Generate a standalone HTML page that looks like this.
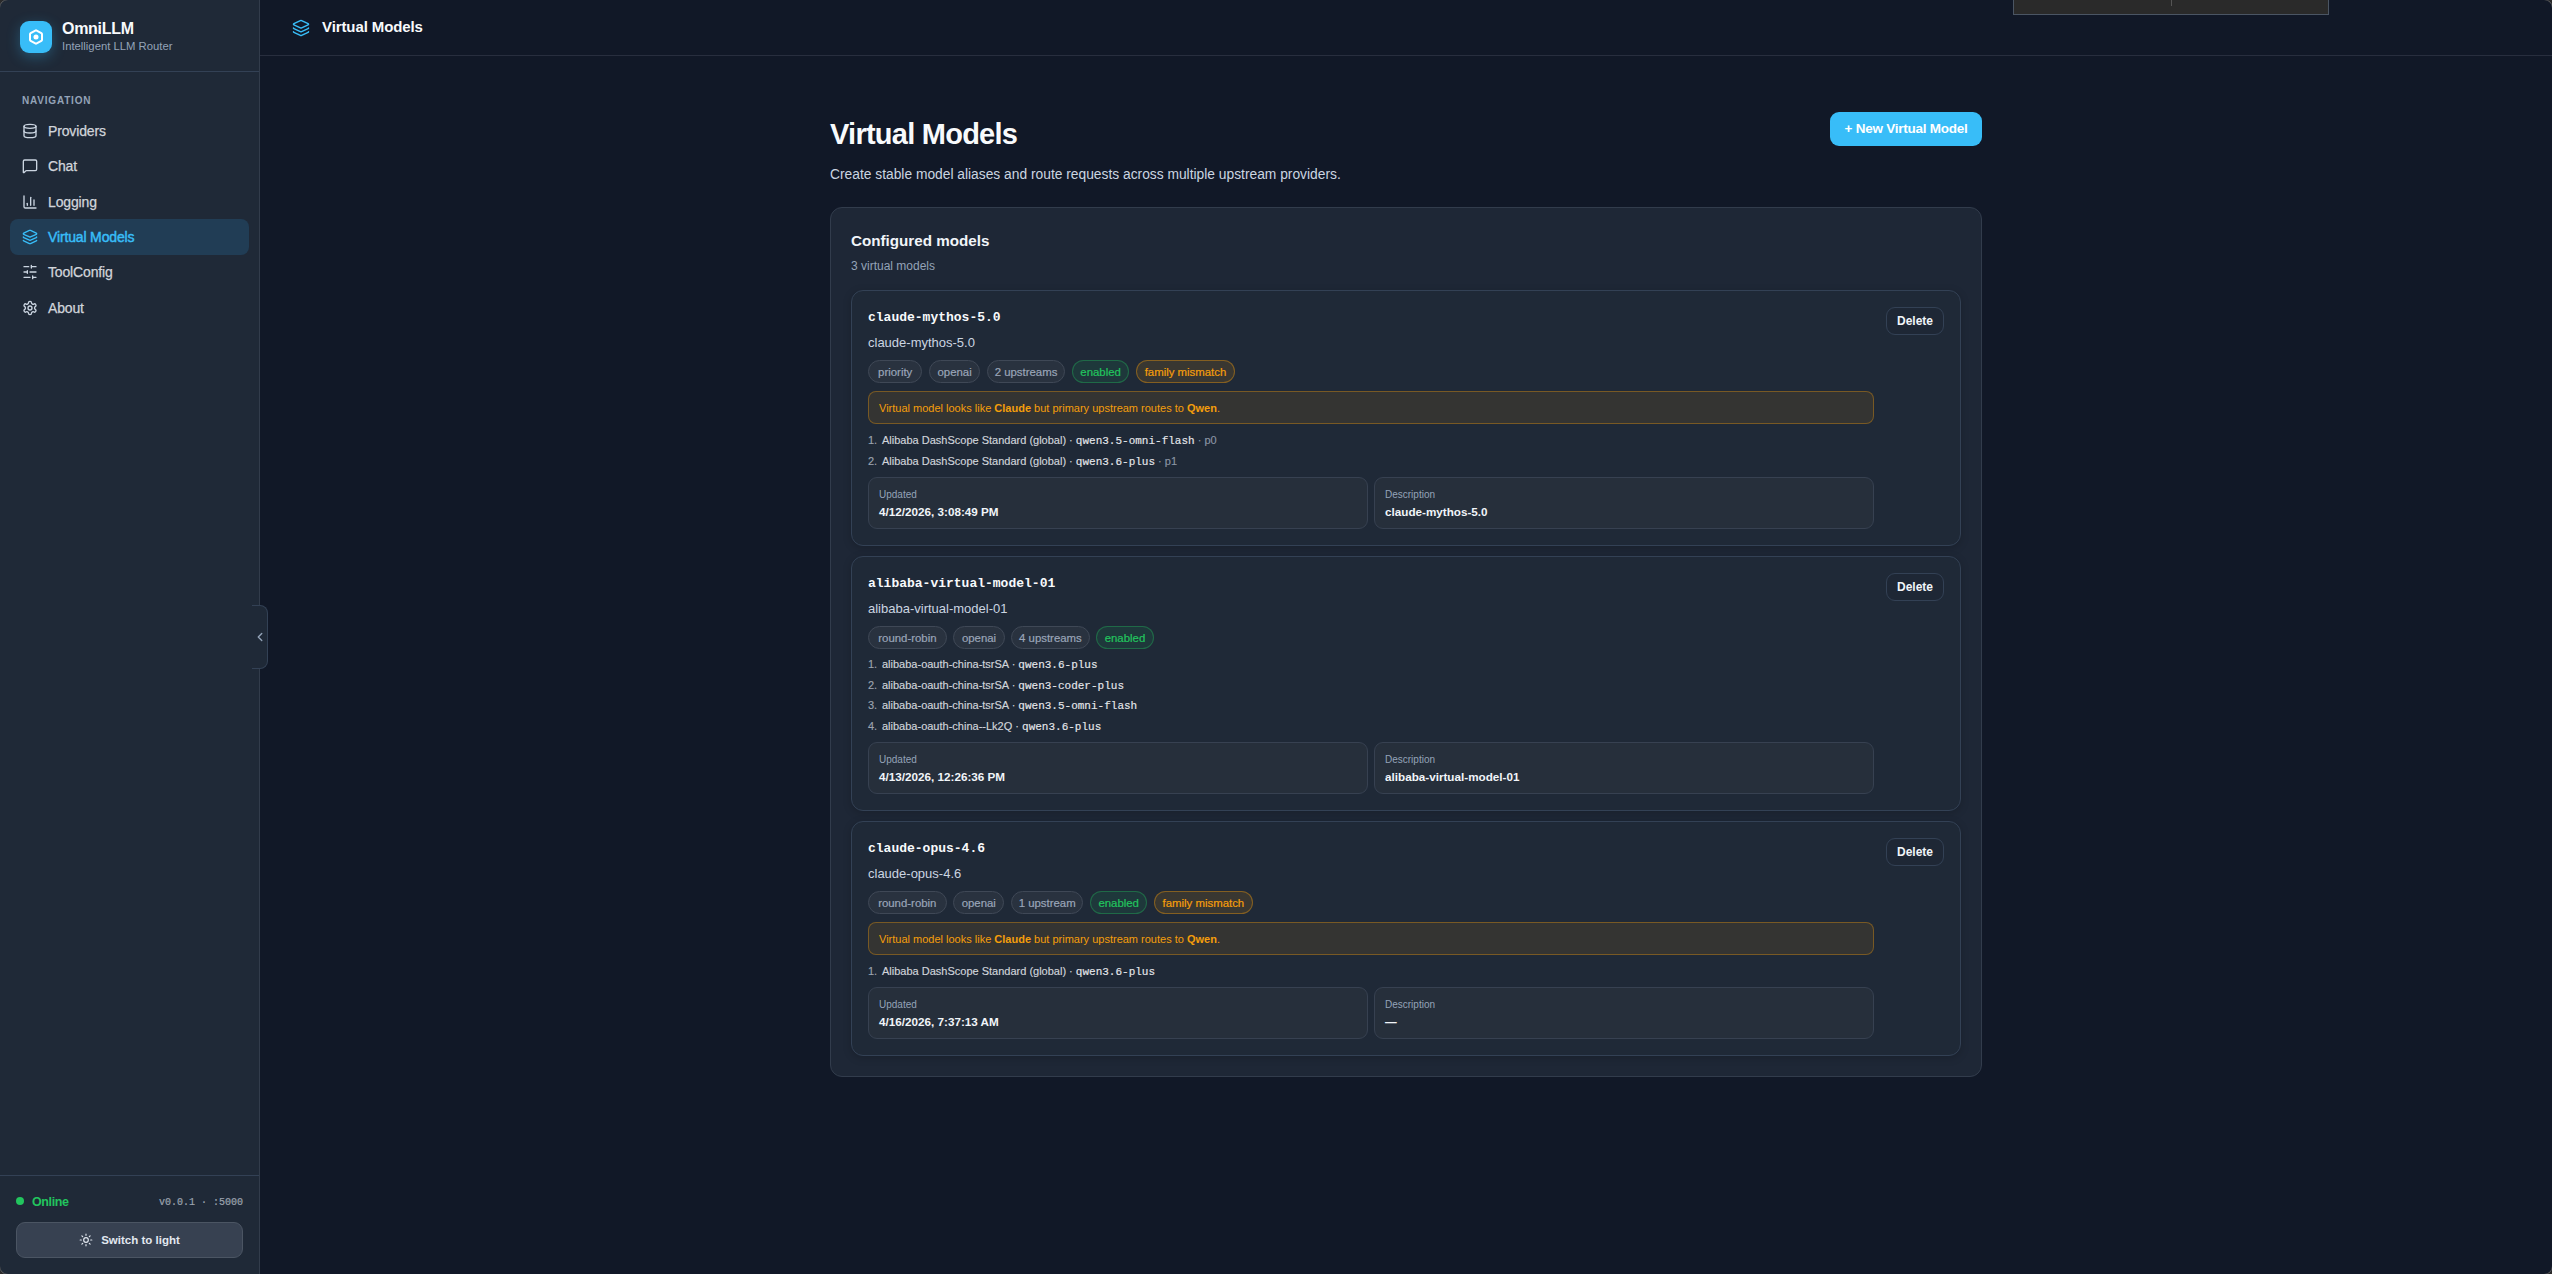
<!DOCTYPE html>
<html><head><meta charset="utf-8"><title>OmniLLM</title>
<style>
*{box-sizing:border-box;margin:0;padding:0}
html,body{-webkit-font-smoothing:antialiased;width:2552px;height:1274px;overflow:hidden;background:#111827;font-family:"Liberation Sans",sans-serif;color:#e5e7eb}
.abs{position:absolute}
svg{display:block}
.mono{font-family:"Liberation Mono",monospace}
/* sidebar */
#sb{position:absolute;left:0;top:0;width:260px;height:1274px;background:#1f2937;border-right:1px solid #323c4b}
#brand{position:absolute;left:0;top:0;width:259px;height:72px;border-bottom:1px solid #334155}
#logo{position:absolute;left:20px;top:21px;width:32px;height:32px;border-radius:9px;background:#38bdf8;box-shadow:0 4px 14px rgba(56,189,248,.3)}
#bname{position:absolute;left:62px;top:19px;font-size:16px;font-weight:700;letter-spacing:-0.3px;color:#f8fafc;line-height:20px;white-space:nowrap}
#bsub{position:absolute;left:62px;top:39px;font-size:11.3px;color:#94a3b8;line-height:14px;white-space:nowrap}
#navlbl{position:absolute;left:22px;top:94.5px;font-size:10px;font-weight:700;letter-spacing:0.8px;color:#94a3b8;line-height:12px}
.nav{position:absolute;left:10px;width:239px;height:36px;border-radius:8px;display:flex;align-items:center;padding-left:12px;font-size:14px;color:#d1d5db;letter-spacing:-0.15px;-webkit-text-stroke:0.25px #d1d5db}
.nav svg{width:16px;height:16px;margin-right:10px;flex:none;stroke:#cbd5e1}
.nav.act{background:#213d55;color:#38bdf8;-webkit-text-stroke:0.45px #38bdf8}
.nav.act svg{stroke:#38bdf8}
#sbfoot{position:absolute;left:0;top:1175px;width:259px;height:99px;border-top:1px solid #334155}
#dot{position:absolute;left:16px;top:1197px;width:8px;height:8px;border-radius:50%;background:#22c55e}
#online{position:absolute;left:32px;top:1195px;letter-spacing:-0.4px;font-size:12.5px;font-weight:700;color:#22c55e;line-height:14px}
#ver{position:absolute;right:16px;top:1197px;font-size:10px;color:#9ca3af;-webkit-text-stroke:0.2px #9ca3af;line-height:12px}
#theme{position:absolute;left:16px;top:1222px;width:227px;height:36px;border-radius:9px;background:#374151;border:1px solid #4b5563;display:flex;align-items:center;justify-content:center;font-size:11.5px;font-weight:700;color:#e2e8f0}
#theme svg{width:14px;height:14px;margin-right:8px;stroke:#e2e8f0}
#tab{position:absolute;left:252px;top:605px;width:16px;height:64px;background:#1f2937;border:1px solid #334155;border-left:none;border-radius:0 8px 8px 0}
#tab svg{position:absolute;left:1px;top:24px;width:14px;height:14px;stroke:#94a3b8}
/* header */
#hdr{position:absolute;left:260px;top:0;width:2292px;height:56px;border-bottom:1px solid #282e3e}
#hdr svg{position:absolute;left:32px;top:19px;width:18px;height:18px;stroke:#38bdf8}
#htitle{position:absolute;left:62px;top:17px;font-size:15px;font-weight:700;color:#f8fafc;line-height:20px;letter-spacing:-0.1px;white-space:nowrap}
#devbox{position:absolute;left:2013px;top:0;width:316px;height:15px;background:#2a2a2a;border:1px solid #4b5563;border-top:none}
#devbox i{position:absolute;left:157px;top:0;width:1px;height:6px;background:#555}
/* content */
#wrap{position:absolute;left:830px;top:0;width:1152px}
#ptitle{position:absolute;left:0;top:116px;font-size:29px;font-weight:700;letter-spacing:-0.75px;color:#f8fafc;line-height:36px;white-space:nowrap}
#pdesc{position:absolute;left:0;top:166px;font-size:13.8px;color:#cbd5e1;line-height:18px;white-space:nowrap}
#newbtn{position:absolute;left:1000px;top:112px;width:152px;height:34px;padding-bottom:2px;border-radius:9px;background:#38bdf8;color:#fff;font-size:13.5px;letter-spacing:-0.25px;font-weight:700;display:flex;align-items:center;justify-content:center}
#card{position:absolute;left:0;top:207px;width:1152px;height:870px;border-radius:12px;background:#1e2736;border:1px solid #323c4c}
#ctitle{position:absolute;left:20px;top:23px;font-size:15.2px;font-weight:700;color:#f1f5f9;line-height:20px;white-space:nowrap}
#csub{position:absolute;left:20px;top:51px;font-size:12px;color:#94a3b8;line-height:14px}
.mc{position:absolute;left:20px;width:1110px;border-radius:12px;background:#1f2937;border:1px solid #334155;box-shadow:0 2px 8px rgba(0,0,0,.18)}
.mcin{position:absolute;left:16px;top:0;width:1006px}
.mname{position:absolute;left:0;font-size:13px;font-weight:700;color:#f8fafc;line-height:16px;white-space:nowrap}
.malias{position:absolute;left:0;font-size:13px;color:#cbd5e1;line-height:16px;white-space:nowrap}
.badges{position:absolute;left:0;display:flex;gap:6.5px}
.bd{padding-bottom:2px;height:23px;border-radius:12px;border:1px solid #3f4856;background:#29323f;color:#9aa5b8;font-size:11.4px;-webkit-text-stroke:0.2px currentColor;padding:0;justify-content:center;display:flex;align-items:center;white-space:nowrap}
.bd.g{background:rgba(34,197,94,.1);border-color:rgba(34,197,94,.35);color:#22c55e}
.bd.o{background:rgba(245,158,11,.12);border-color:rgba(245,158,11,.4);color:#f59e0b}
.warn{position:absolute;left:0;width:1006px;height:33px;border-radius:8px;background:rgba(245,158,11,.1);border:1px solid rgba(245,158,11,.35);color:#f59e0b;font-size:11px;line-height:14px;padding:9px 0 0 10px;white-space:nowrap}
.warn b{font-weight:700}
.ups{position:absolute;left:0;font-size:11px;color:#d1d5db;-webkit-text-stroke:0.15px currentColor;line-height:20.5px;white-space:nowrap}
.ups>div{height:20.5px}
.ups .n{display:inline-block;width:14px;color:#9ca3af}
.ups .m{font-family:"Liberation Mono",monospace;font-size:11px;color:#e5e7eb}
.ups .p{color:#8b95a5}
.info{position:absolute;width:500px;height:52px;border-radius:9px;background:#262f3b;border:1px solid #374151}
.info .k{position:absolute;left:10px;top:11px;font-size:10px;color:#94a3b8;line-height:12px}
.info .v{position:absolute;left:10px;top:27px;font-size:11.7px;font-weight:700;color:#f1f5f9;line-height:14px;white-space:nowrap}
.del{position:absolute;right:16px;width:58px;height:28px;border-radius:9px;border:1px solid #334155;background:#1e2735;color:#f1f5f9;font-size:12px;font-weight:700;display:flex;align-items:center;justify-content:center}
#frame{position:absolute;left:-1px;top:-1px;width:2554px;height:1276px;border-radius:9px;border:1px solid #5a5a5a;box-shadow:0 0 0 40px #2b2b2b;pointer-events:none}
</style></head>
<body>
<div id="sb">
  <div id="brand">
    <div id="logo"><svg viewBox="0 0 24 24" width="32" height="32" fill="none" stroke="#fff" stroke-width="1.6" stroke-linejoin="round"><path transform="translate(6 6) scale(.5)" d="M21 16V8a2 2 0 0 0-1-1.73l-7-4a2 2 0 0 0-2 0l-7 4A2 2 0 0 0 3 8v8a2 2 0 0 0 1 1.73l7 4a2 2 0 0 0 2 0l7-4A2 2 0 0 0 21 16z" stroke-width="3"/><circle cx="12" cy="12" r="1.9" fill="#fff" stroke="none"/></svg></div>
    <div id="bname">OmniLLM</div>
    <div id="bsub">Intelligent LLM Router</div>
  </div>
  <div id="navlbl">NAVIGATION</div>
  <div class="nav" style="top:113.01px"><svg viewBox="0 0 24 24" fill="none" stroke-width="2" stroke-linecap="round" stroke-linejoin="round"><ellipse cx="12" cy="5" rx="9" ry="3"/><path d="M3 5V19A9 3 0 0 0 21 19V5"/><path d="M3 12A9 3 0 0 0 21 12"/></svg>Providers</div>
  <div class="nav" style="top:148.34px"><svg viewBox="0 0 24 24" fill="none" stroke-width="2" stroke-linecap="round" stroke-linejoin="round"><path d="M22 17a2 2 0 0 1-2 2H6.828a2 2 0 0 0-1.414.586l-2.202 2.202A.71.71 0 0 1 2 21.286V5a2 2 0 0 1 2-2h16a2 2 0 0 1 2 2z"/></svg>Chat</div>
  <div class="nav" style="top:183.67px"><svg viewBox="0 0 24 24" fill="none" stroke-width="2" stroke-linecap="round" stroke-linejoin="round"><path d="M3 3v16a2 2 0 0 0 2 2h16"/><path d="M18 17V9"/><path d="M13 17V5"/><path d="M8 17v-3"/></svg>Logging</div>
  <div class="nav act" style="top:219.00px"><svg viewBox="0 0 24 24" fill="none" stroke-width="2" stroke-linecap="round" stroke-linejoin="round"><path d="M12.83 2.18a2 2 0 0 0-1.66 0L2.6 6.08a1 1 0 0 0 0 1.83l8.58 3.91a2 2 0 0 0 1.66 0l8.58-3.9a1 1 0 0 0 0-1.83z"/><path d="M2 12a1 1 0 0 0 .58.91l8.6 3.91a2 2 0 0 0 1.65 0l8.58-3.9A1 1 0 0 0 22 12"/><path d="M2 17a1 1 0 0 0 .58.91l8.6 3.91a2 2 0 0 0 1.65 0l8.58-3.9A1 1 0 0 0 22 17"/></svg>Virtual Models</div>
  <div class="nav" style="top:254.33px"><svg viewBox="0 0 24 24" fill="none" stroke-width="2" stroke-linecap="round" stroke-linejoin="round"><path d="M21 4h-7M10 4H3M21 12h-9M8 12H3M21 20h-5M12 20H3M14 2v4M8 10v4M16 18v4"/></svg>ToolConfig</div>
  <div class="nav" style="top:289.66px"><svg viewBox="0 0 24 24" fill="none" stroke-width="2" stroke-linecap="round" stroke-linejoin="round"><path d="M12.22 2h-.44a2 2 0 0 0-2 2v.18a2 2 0 0 1-1 1.73l-.43.25a2 2 0 0 1-2 0l-.15-.08a2 2 0 0 0-2.73.73l-.22.38a2 2 0 0 0 .73 2.73l.15.1a2 2 0 0 1 1 1.72v.51a2 2 0 0 1-1 1.74l-.15.09a2 2 0 0 0-.73 2.73l.22.38a2 2 0 0 0 2.73.73l.15-.08a2 2 0 0 1 2 0l.43.25a2 2 0 0 1 1 1.73V20a2 2 0 0 0 2 2h.44a2 2 0 0 0 2-2v-.18a2 2 0 0 1 1-1.73l.43-.25a2 2 0 0 1 2 0l.15.08a2 2 0 0 0 2.73-.73l.22-.39a2 2 0 0 0-.73-2.73l-.15-.08a2 2 0 0 1-1-1.74v-.5a2 2 0 0 1 1-1.74l.15-.09a2 2 0 0 0 .73-2.73l-.22-.38a2 2 0 0 0-2.73-.73l-.15.08a2 2 0 0 1-2 0l-.43-.25a2 2 0 0 1-1-1.73V4a2 2 0 0 0-2-2z"/><circle cx="12" cy="12" r="3"/></svg>About</div>
  
  <div id="sbfoot"></div>
  <div id="dot"></div>
  <div id="online">Online</div>
  <div id="ver" class="mono">v0.0.1 · :5000</div>
  <div id="theme"><svg viewBox="0 0 24 24" fill="none" stroke-width="2" stroke-linecap="round"><circle cx="12" cy="12" r="4"/><path d="M12 2v2M12 20v2m-7.07-17.07 1.41 1.41m11.32 11.32 1.41 1.41M2 12h2m16 0h2M6.34 17.66l-1.41 1.41M19.07 4.93l-1.41 1.41"/></svg>Switch to light</div>
</div>
<div id="tab"><svg viewBox="0 0 24 24" fill="none" stroke-width="2.4" stroke-linecap="round" stroke-linejoin="round"><path d="m15 18-6-6 6-6"/></svg></div>
<div id="hdr">
  <svg viewBox="0 0 24 24" fill="none" stroke-width="2" stroke-linecap="round" stroke-linejoin="round"><path d="M12.83 2.18a2 2 0 0 0-1.66 0L2.6 6.08a1 1 0 0 0 0 1.83l8.58 3.91a2 2 0 0 0 1.66 0l8.58-3.9a1 1 0 0 0 0-1.83z"/><path d="M2 12a1 1 0 0 0 .58.91l8.6 3.91a2 2 0 0 0 1.65 0l8.58-3.9A1 1 0 0 0 22 12"/><path d="M2 17a1 1 0 0 0 .58.91l8.6 3.91a2 2 0 0 0 1.65 0l8.58-3.9A1 1 0 0 0 22 17"/></svg>
  <div id="htitle">Virtual Models</div>
</div>
<div id="devbox"><i></i></div>
<div id="wrap">
  <div id="ptitle">Virtual Models</div>
  <div id="newbtn">+ New Virtual Model</div>
  <div id="pdesc">Create stable model aliases and route requests across multiple upstream providers.</div>
  <div id="card">
    <div id="ctitle">Configured models</div>
    <div id="csub">3 virtual models</div>
    <div class="mc" style="top:82px;height:256px"><div class="mname mono" style="left:16px;top:18.50px">claude-mythos-5.0</div><div class="malias" style="left:16px;top:44.00px">claude-mythos-5.0</div><div class="badges" style="left:16px;top:69px"><span class="bd " style="width:54.4px">priority</span><span class="bd " style="width:51.4px">openai</span><span class="bd " style="width:78.5px">2 upstreams</span><span class="bd g" style="width:57.7px">enabled</span><span class="bd o" style="width:99px">family mismatch</span></div><div class="warn" style="left:16px;top:100px">Virtual model looks like <b>Claude</b> but primary upstream routes to <b>Qwen</b>.</div><div class="ups" style="left:16px;top:139.00px"><div><span class="n">1.</span>Alibaba DashScope Standard (global) · <span class="m">qwen3.5-omni-flash</span><span class="p"> · p0</span></div><div><span class="n">2.</span>Alibaba DashScope Standard (global) · <span class="m">qwen3.6-plus</span><span class="p"> · p1</span></div></div><div class="info" style="left:16px;top:186px"><div class="k">Updated</div><div class="v">4/12/2026, 3:08:49 PM</div></div><div class="info" style="left:522px;top:186px"><div class="k">Description</div><div class="v">claude-mythos-5.0</div></div><div class="del" style="top:16px">Delete</div></div>
    <div class="mc" style="top:348px;height:255px"><div class="mname mono" style="left:16px;top:18.50px">alibaba-virtual-model-01</div><div class="malias" style="left:16px;top:44.00px">alibaba-virtual-model-01</div><div class="badges" style="left:16px;top:69px"><span class="bd " style="width:78.9px">round-robin</span><span class="bd " style="width:51.3px">openai</span><span class="bd " style="width:78.5px">4 upstreams</span><span class="bd g" style="width:57.6px">enabled</span></div><div class="ups" style="left:16px;top:97.00px"><div><span class="n">1.</span>alibaba-oauth-china-tsrSA · <span class="m">qwen3.6-plus</span></div><div><span class="n">2.</span>alibaba-oauth-china-tsrSA · <span class="m">qwen3-coder-plus</span></div><div><span class="n">3.</span>alibaba-oauth-china-tsrSA · <span class="m">qwen3.5-omni-flash</span></div><div><span class="n">4.</span>alibaba-oauth-china--Lk2Q · <span class="m">qwen3.6-plus</span></div></div><div class="info" style="left:16px;top:185px"><div class="k">Updated</div><div class="v">4/13/2026, 12:26:36 PM</div></div><div class="info" style="left:522px;top:185px"><div class="k">Description</div><div class="v">alibaba-virtual-model-01</div></div><div class="del" style="top:16px">Delete</div></div>
    <div class="mc" style="top:613px;height:235px"><div class="mname mono" style="left:16px;top:18.50px">claude-opus-4.6</div><div class="malias" style="left:16px;top:44.00px">claude-opus-4.6</div><div class="badges" style="left:16px;top:69px"><span class="bd " style="width:78.6px">round-robin</span><span class="bd " style="width:51.3px">openai</span><span class="bd " style="width:72.5px">1 upstream</span><span class="bd g" style="width:57.6px">enabled</span><span class="bd o" style="width:98.8px">family mismatch</span></div><div class="warn" style="left:16px;top:100px">Virtual model looks like <b>Claude</b> but primary upstream routes to <b>Qwen</b>.</div><div class="ups" style="left:16px;top:139.00px"><div><span class="n">1.</span>Alibaba DashScope Standard (global) · <span class="m">qwen3.6-plus</span></div></div><div class="info" style="left:16px;top:165px"><div class="k">Updated</div><div class="v">4/16/2026, 7:37:13 AM</div></div><div class="info" style="left:522px;top:165px"><div class="k">Description</div><div class="v">—</div></div><div class="del" style="top:16px">Delete</div></div>
    
  </div>
</div>
<div id="frame"></div>
</body></html>
